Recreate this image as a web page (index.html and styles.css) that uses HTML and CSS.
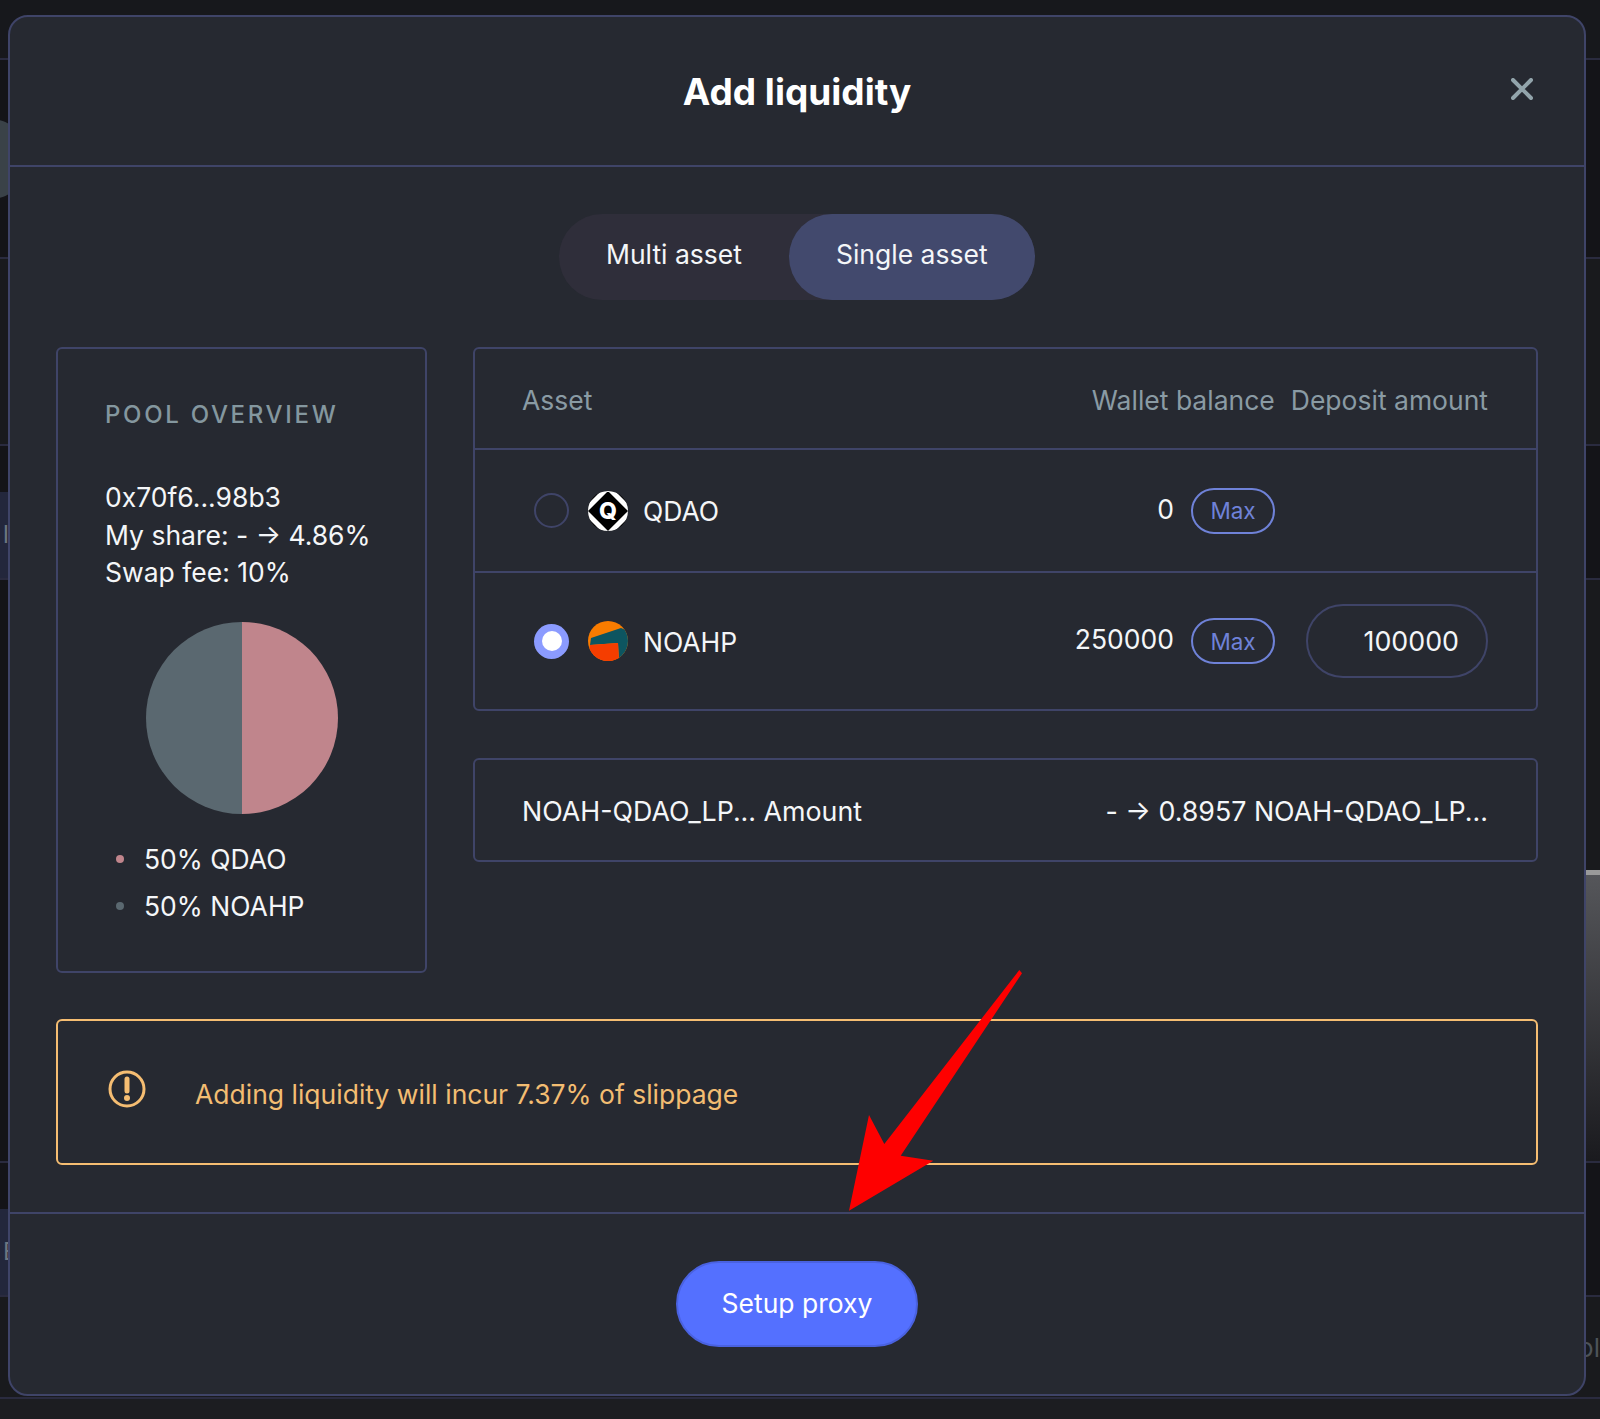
FILE: index.html
```html
<!DOCTYPE html>
<html lang="en">
<head>
    <meta charset="UTF-8">
    <meta name="viewport" content="width=device-width, initial-scale=1.0">
    <title>Add liquidity</title>
    <link rel="stylesheet" href="styles.css">
</head>
<body>
    <!-- Page behind the dialog, only its edges show -->
    <div class="page">
        <div class="band band-top"></div>
        <div class="band band-dark band-a"><div class="avatar"></div></div>
        <div class="band band-mid band-b"></div>
        <div class="band band-dark band-c"><div class="side-cell">l</div></div>
        <div class="band band-split band-d"><div class="scroll-thumb"></div></div>
        <div class="band band-dark band-e"><div class="side-cell">E</div></div>
        <div class="band band-mid band-f"><span class="side-text">ol</span></div>
        <div class="band band-bottom"></div>
    </div>

    <!-- Add liquidity dialog -->
    <div class="modal">
        <div class="modal-header">
            <h2>Add liquidity</h2>
            <svg class="close" width="22" height="22" viewBox="0 0 22 22">
                <path d="M2 2 L20 20 M20 2 L2 20" stroke="#92a4ab" stroke-width="4" stroke-linecap="round"/>
            </svg>
        </div>

        <div class="modal-body">
            <div class="tabs">
                <div class="tab">Multi asset</div>
                <div class="tab tab-active">Single asset</div>
            </div>

            <div class="columns">
                <div class="card pool">
                    <div class="pool-title">POOL OVERVIEW</div>
                    <div class="pool-info">
                        <div>0x70f6...98b3</div>
                        <div>My share: - → 4.86%</div>
                        <div>Swap fee: 10%</div>
                    </div>
                    <div class="pie"></div>
                    <div class="legend">
                        <div class="legend-item"><span class="dot dot-pink"></span>50% QDAO</div>
                        <div class="legend-item"><span class="dot dot-gray"></span>50% NOAHP</div>
                    </div>
                </div>

                <div class="right-col">
                    <div class="card">
                        <div class="table-head">
                            <span class="head-asset">Asset</span>
                            <span>Wallet balance</span>
                            <span>Deposit amount</span>
                        </div>
                        <div class="asset-row row-first">
                            <div class="asset-main">
                                <span class="radio"></span>
                                <svg class="token" width="40" height="40" viewBox="0 0 40 40">
                                    <clipPath id="qdaoClip"><circle cx="20" cy="20" r="20"/></clipPath>
                                    <g clip-path="url(#qdaoClip)">
                                        <rect width="40" height="40" fill="#000"/>
                                        <path d="M20 -3.5 L43.5 20 L20 43.5 L-3.5 20 Z" fill="none" stroke="#fff" stroke-width="5"/>
                                    </g>
                                    <text x="20" y="28" text-anchor="middle" class="token-q">Q</text>
                                </svg>
                                <span class="asset-name">QDAO</span>
                                <span class="balance">0</span>
                                <button class="max">Max</button>
                            </div>
                            <div></div>
                        </div>
                        <div class="asset-row row-second">
                            <div class="asset-main">
                                <span class="radio radio-on"></span>
                                <svg class="token" width="40" height="40" viewBox="0 0 40 40">
                                    <clipPath id="noahClip"><circle cx="20" cy="20" r="20"/></clipPath>
                                    <g clip-path="url(#noahClip)">
                                        <rect width="40" height="40" fill="#f97c00"/>
                                        <polygon points="3,17 33,7 40,10 40,40 31,40 30,22 2,24" fill="#0d5560"/>
                                        <polygon points="2,24 30,22 31,40 0,40" fill="#f53d00"/>
                                    </g>
                                </svg>
                                <span class="asset-name">NOAHP</span>
                                <span class="balance">250000</span>
                                <button class="max">Max</button>
                            </div>
                            <div class="deposit">100000</div>
                        </div>
                    </div>

                    <div class="card lp-box">
                        <span>NOAH-QDAO_LP... Amount</span>
                        <span>- → 0.8957 NOAH-QDAO_LP...</span>
                    </div>
                </div>
            </div>

            <div class="warning">
                <svg class="warning-icon" width="38" height="38" viewBox="0 0 38 38">
                    <circle cx="19" cy="19" r="17" fill="none" stroke="#f5bd72" stroke-width="3"/>
                    <path d="M19 9 V21" stroke="#f5bd72" stroke-width="5" stroke-linecap="round"/>
                    <circle cx="19" cy="28" r="3" fill="#f5bd72"/>
                </svg>
                <span class="warning-text">Adding liquidity will incur 7.37% of slippage</span>
            </div>
        </div>

        <div class="modal-footer">
            <button class="setup">Setup proxy</button>
        </div>
    </div>

    <!-- Red annotation arrow drawn over the dialog -->
    <svg class="arrow" width="1600" height="1419" viewBox="0 0 1600 1419">
        <polygon points="1019.3,970 1022,973.3 900.7,1155.7 933.3,1160.7 849,1210.7 869,1115 884.3,1144" fill="#fe0000"/>
    </svg>
</body>
</html>
```

FILE: styles.css
```css
* {
    box-sizing: border-box;
}
body {
    margin: 0;
    height: 1419px;
    overflow: hidden;
    font-family: Inter, "Noto Sans", sans-serif;
    background-color: #1c1d21;
    color: #f4f6f8;
}

/* background page */
.page {
    display: flex;
    flex-direction: column;
    height: 1419px;
}
.band {
    display: flex;
    justify-content: space-between;
    border-bottom: 2px solid #2a2b3f;
}
.band-top {
    height: 60px;
    background-color: #17181c;
}
.band-dark {
    background-color: #141418;
}
.band-mid {
    background-color: #191a1d;
}
.band-a {
    height: 199px;
    align-items: center;
}
.band-b {
    height: 187px;
}
.band-c {
    height: 134px;
    align-items: flex-end;
}
.band-d {
    height: 583px;
    background: linear-gradient(to right, #141418 50%, #191a1d 50%);
    align-items: flex-end;
    justify-content: flex-end;
}
.band-e {
    height: 134px;
    align-items: flex-end;
}
.band-f {
    height: 102px;
    justify-content: flex-end;
    align-items: center;
}
.band-bottom {
    border-bottom: none;
    flex: 1;
    background-color: #1c1d21;
}
.avatar {
    width: 80px;
    height: 80px;
    margin-left: -50px;
    border-radius: 50%;
    background-color: #3a4248;
}
.side-cell {
    width: 8px;
    height: 86px;
    background-color: #23273c;
    color: #6d7680;
    font-size: 24px;
    line-height: 86px;
    padding-left: 3px;
}
.scroll-thumb {
    width: 14px;
    height: 291px;
    background: linear-gradient(to bottom, #55565a, #1a1a1e);
    border-top: 5px solid #9a9a9a;
}
.side-text {
    color: #4d5358;
    font-size: 26px;
}

/* dialog */
.modal {
    position: absolute;
    left: 8px;
    top: 15px;
    width: 1578px;
    height: 1381px;
    background-color: #262931;
    border: 2px solid #3f4468;
    border-radius: 20px;
}
.modal-header {
    display: grid;
    grid-template-columns: 1fr auto 1fr;
    align-items: center;
    height: 150px;
    padding: 0 51px;
    border-bottom: 2px solid #3f4468;
}
.modal-header h2 {
    grid-column: 2;
    margin: 0;
    font-size: 37px;
    font-weight: 700;
    color: #fff;
}
.close {
    justify-self: end;
    margin-bottom: 4px;
}
.modal-body {
    padding: 47px 46px;
    border-bottom: 2px solid #3f4468;
}

/* tabs */
.tabs {
    display: flex;
    width: 476px;
    height: 86px;
    margin: 0 auto 47px;
    background-color: #2f2e3a;
    border-radius: 43px;
}
.tab {
    padding: 0 47px;
    font-size: 26.5px;
    line-height: 80px;
    white-space: nowrap;
    border-radius: 43px;
}
.tab-active {
    flex: 1;
    background-color: #42496d;
}

.columns {
    display: flex;
    gap: 46px;
}
.card {
    border: 2px solid #3f4468;
    border-radius: 6px;
}

/* pool overview */
.pool {
    width: 371px;
    height: 626px;
    padding: 50px 47px 0;
    flex-shrink: 0;
}
.pool-title {
    font-size: 24px;
    font-weight: 500;
    letter-spacing: 2.7px;
    color: #84979f;
    line-height: 32px;
    white-space: nowrap;
}
.pool-info {
    margin-top: 48px;
    font-size: 26.5px;
    line-height: 37.5px;
    white-space: nowrap;
}
.pie {
    width: 192px;
    height: 192px;
    margin: 30px auto 0;
    border-radius: 50%;
    background: linear-gradient(to right, #5a6870 50%, #c0858c 50%);
}
.legend {
    margin: 22px 0 0 11px;
}
.legend-item {
    display: flex;
    align-items: center;
    font-size: 26.5px;
    line-height: 47px;
}
.dot {
    width: 8px;
    height: 8px;
    margin-right: 20px;
    border-radius: 50%;
}
.dot-pink {
    background-color: #c0858c;
}
.dot-gray {
    background-color: #5a6870;
}

/* asset table */
.right-col {
    flex: 1;
    display: flex;
    flex-direction: column;
    gap: 47px;
}
.table-head {
    display: flex;
    gap: 16px;
    align-items: center;
    height: 101px;
    padding: 2px 48px 0 47px;
    font-size: 26.5px;
    color: #8a9ba4;
    border-bottom: 2px solid #3f4468;
}
.head-asset {
    flex: 1;
}
.asset-row {
    display: grid;
    grid-template-columns: 1fr 182px;
    gap: 31px;
    align-items: center;
    padding: 0 48px 0 59px;
}
.row-first {
    height: 123px;
    border-bottom: 2px solid #3f4468;
}
.row-second {
    height: 136px;
}
.asset-main {
    display: flex;
    align-items: center;
}
.radio {
    display: flex;
    align-items: center;
    justify-content: center;
    width: 35px;
    height: 35px;
    border: 2px solid #3f4468;
    border-radius: 50%;
}
.radio-on {
    border: none;
    background-color: #8b9bff;
}
.radio-on::after {
    content: "";
    width: 20px;
    height: 20px;
    border-radius: 50%;
    background-color: #fff;
}
.token {
    margin: 0 15px 0 19px;
    flex-shrink: 0;
}
.token-q {
    font-family: Inter, sans-serif;
    font-size: 23px;
    font-weight: 800;
    fill: #fff;
}
.asset-name {
    flex: 1;
    padding-top: 1px;
    font-size: 26.5px;
}
.balance {
    margin: 0 17px 4px 0;
    font-size: 26.5px;
}
.max {
    width: 84px;
    height: 46px;
    padding: 0;
    font-family: inherit;
    font-size: 22.5px;
    color: #6f82d8;
    background: none;
    border: 2px solid #6f82d8;
    border-radius: 23px;
}
.deposit {
    height: 74px;
    padding-right: 27px;
    font-size: 26.8px;
    line-height: 70px;
    text-align: right;
    border: 2px solid #3f4468;
    border-radius: 37px;
}
.lp-box {
    display: flex;
    justify-content: space-between;
    align-items: center;
    height: 104px;
    padding: 2px 48px 0 47px;
    font-size: 26.8px;
}

/* slippage warning */
.warning {
    display: flex;
    align-items: center;
    height: 146px;
    margin-top: 46px;
    padding: 0 0 0 50px;
    font-size: 26.5px;
    color: #f3bd72;
    border: 2px solid #f5bd72;
    border-radius: 6px;
}
.warning-icon {
    margin: -6px 49px 0 0;
}
.warning-text {
    padding-top: 3px;
}

.modal-footer {
    display: flex;
    justify-content: center;
    padding-top: 47px;
}
.setup {
    width: 242px;
    height: 86px;
    padding: 0 0 3px;
    font-family: inherit;
    font-size: 26.5px;
    color: #fff;
    background-color: #5470ff;
    border: 2px solid #4a62e0;
    border-radius: 43px;
}

.arrow {
    position: absolute;
    left: 0;
    top: 0;
    pointer-events: none;
}
```
